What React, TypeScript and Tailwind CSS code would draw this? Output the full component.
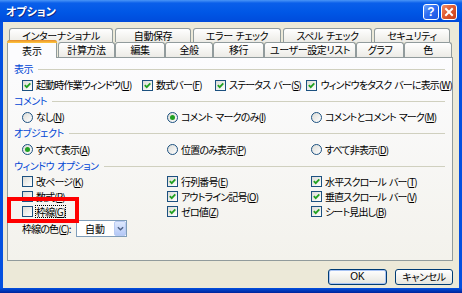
import React from "react";

function Sp({ text }: { text: string }) {
  const parts = text.split(" ");
  return (
    <>
      {parts.map((p, i) => (
        <React.Fragment key={i}>
          {i > 0 && <span className="inline-block w-[3px]" />}
          {p}
        </React.Fragment>
      ))}
    </>
  );
}

function Mn({ label, k }: { label: string; k: string }) {
  return (
    <>
      <Sp text={label} />(<span className="underline underline-offset-[1px]">{k}</span>)
    </>
  );
}

function CheckBox({ checked }: { checked?: boolean }) {
  return (
    <span className="relative block w-[11px] h-[11px] shrink-0 border border-[#1c5180] bg-linear-to-br from-[#dcdcd7] to-white">
      {checked && (
        <svg viewBox="0 0 9 9" className="absolute left-0 top-0 w-[9px] h-[9px]">
          <path d="M1.8 4.2 L3.7 6.1 L7.3 2.3" stroke="#21a121" strokeWidth="1.8" fill="none" />
        </svg>
      )}
    </span>
  );
}

function Radio({ checked }: { checked?: boolean }) {
  return (
    <span className="flex w-[11px] h-[11px] shrink-0 rounded-full border border-[#1c5180] bg-linear-to-br from-[#dcdcd7] to-white items-center justify-center">
      {checked && <span className="block w-[5px] h-[5px] rounded-full bg-[#21a121]" />}
    </span>
  );
}

function Item({
  radio,
  checked,
  label,
  k,
  w,
  focus,
}: {
  radio?: boolean;
  checked?: boolean;
  label: string;
  k: string;
  w?: string;
  focus?: boolean;
}) {
  return (
    <div className={`flex items-center gap-[3px] whitespace-nowrap ${w ?? ""}`}>
      {radio ? <Radio checked={checked} /> : <CheckBox checked={checked} />}
      <span className={`tracking-[-0.85px] ${focus ? "outline-1 outline-dotted outline-black outline-offset-0 leading-[11px]" : ""}`}>
        <Mn label={label} k={k} />
      </span>
    </div>
  );
}

function Heading({ text, h }: { text: string; h: string }) {
  return (
    <div className={`flex items-center pl-[6px] pr-[7px] ${h}`}>
      <span className="text-[#0046d5] whitespace-nowrap tracking-[-0.5px]">
        <Sp text={text} />
      </span>
      <span className="flex-1 h-px bg-[#d0d0bf] ml-[5px] mt-[1px]" />
    </div>
  );
}

function BackTab({ label, w }: { label: string; w: string }) {
  return (
    <div
      className={`h-[14px] ${w} border border-b-0 border-[#919b9c] rounded-t-[3px] bg-linear-to-b from-white to-[#ecebe6] flex items-center justify-center whitespace-nowrap tracking-[-0.4px]`}
    >
      <Sp text={label} />
    </div>
  );
}

function FrontTab({ label, w }: { label: string; w: string }) {
  return (
    <div
      className={`h-[15px] ${w} border border-b-0 border-[#919b9c] rounded-t-[3px] bg-linear-to-b from-white to-[#ecebe6] flex items-center justify-center whitespace-nowrap tracking-[-0.4px]`}
    >
      {label}
    </div>
  );
}

export default function App() {
  return (
    <div className="relative w-[462px] h-[293px] flex flex-col bg-[#0450e0] text-[10px] leading-none text-black font-['Noto_Sans_CJK_JP',sans-serif] [font-feature-settings:'palt'] overflow-hidden">
      {/* Title bar */}
      <div className="h-[22px] shrink-0 flex items-center bg-[linear-gradient(to_bottom,#4a95f7_0%,#0a5fea_14%,#0057e6_55%,#004bdb_100%)]">
        <span className="flex-1 pl-[6px] text-white font-bold text-[11px] [text-shadow:1px_1px_#0a2a8a]">オプション</span>
        <div className="flex gap-[2px] mr-[5px] mt-[1px]">
          <div className="w-[16px] h-[16px] rounded-[3px] border border-white bg-[linear-gradient(135deg,#6fa5fb_0%,#2d6cf2_45%,#1a55e0_100%)] flex items-center justify-center text-white font-bold text-[12px] font-['Liberation_Sans',sans-serif]">
            ?
          </div>
          <div className="w-[16px] h-[16px] rounded-[3px] border border-white bg-[linear-gradient(135deg,#f0906c_0%,#e05a30_45%,#c8401a_100%)] flex items-center justify-center">
            <svg viewBox="0 0 14 14" className="w-[14px] h-[14px]">
              <path d="M4 4 L10 10 M10 4 L4 10" stroke="white" strokeWidth="2" strokeLinecap="square" />
            </svg>
          </div>
        </div>
      </div>

      {/* Body */}
      <div className="flex-1 mx-[3px] bg-[#ece9d8] flex flex-col pt-[6px] pl-[4px] pr-[6px]">
        {/* back tab row */}
        <div className="flex gap-[2px] ml-[2px] h-[14px]">
          <BackTab label="インターナショナル" w="w-[104px]" />
          <BackTab label="自動保存" w="w-[76px]" />
          <BackTab label="エラー チェック" w="w-[88px]" />
          <BackTab label="スペル チェック" w="w-[89px]" />
          <BackTab label="セキュリティ" w="w-[76px]" />
        </div>
        {/* front tab row */}
        <div className="flex items-end h-[17px] mt-[-2px]">
          <div className="relative z-10 w-[50px] h-[18px] mb-[-1px] border border-b-0 border-[#919b9c] rounded-t-[3px] bg-[#fcfcfe] flex flex-col mr-[1px]">
            <div className="h-[3px] mx-[-1px] mt-[-1px] rounded-t-[3px] bg-linear-to-b from-[#e68b2c] to-[#ffc83c]" />
            <div className="flex-1 flex items-center justify-center">表示</div>
          </div>
          <FrontTab label="計算方法" w="w-[57px]" />
          <FrontTab label="編集" w="w-[50px]" />
          <FrontTab label="全般" w="w-[48px]" />
          <FrontTab label="移行" w="w-[51px]" />
          <FrontTab label="ユーザー設定リスト" w="w-[92px]" />
          <FrontTab label="グラフ" w="w-[48px]" />
          <FrontTab label="色" w="w-[48px]" />
        </div>

        {/* Panel */}
        <div className="h-[204px] border border-[#919b9c] bg-linear-to-b from-[#fcfcfe] to-[#f3f2ec] flex flex-col pt-[3px]">
          <Heading text="表示" h="h-[16px]" />
          <div className="h-[16px] flex items-center pl-[14px]">
            <Item label="起動時作業ウィンドウ" k="U" checked w="w-[122px]" />
            <Item label="数式バー" k="F" checked w="w-[74px]" />
            <Item label="ステータス バー" k="S" checked w="w-[93px]" />
            <Item label="ウィンドウをタスク バーに表示" k="W" checked />
          </div>
          <Heading text="コメント" h="h-[16px]" />
          <div className="h-[16px] flex items-center pl-[14px]">
            <Item radio label="なし" k="N" w="w-[145px]" />
            <Item radio checked label="コメント マークのみ" k="I" w="w-[144px]" />
            <Item radio label="コメントとコメント マーク" k="M" />
          </div>
          <Heading text="オブジェクト" h="h-[16px]" />
          <div className="h-[17px] flex items-center pl-[14px]">
            <Item radio checked label="すべて表示" k="A" w="w-[145px]" />
            <Item radio label="位置のみ表示" k="P" w="w-[144px]" />
            <Item radio label="すべて非表示" k="D" />
          </div>
          <Heading text="ウィンドウ オプション" h="h-[15px]" />
          <div className="h-[15px] mt-[1px] flex items-center pl-[14px]">
            <Item label="改ページ" k="K" w="w-[145px]" />
            <Item label="行列番号" k="E" checked w="w-[144px]" />
            <Item label="水平スクロール バー" k="T" checked />
          </div>
          <div className="h-[15px] flex items-center pl-[14px]">
            <Item label="数式" k="R" w="w-[145px]" />
            <Item label="アウトライン記号" k="O" checked w="w-[144px]" />
            <Item label="垂直スクロール バー" k="V" checked />
          </div>
          <div className="h-[15px] flex items-center pl-[14px]">
            <Item label="枠線" k="G" focus w="w-[145px]" />
            <Item label="ゼロ値" k="Z" checked w="w-[144px]" />
            <Item label="シート見出し" k="B" checked />
          </div>
          <div className="h-[17px] mt-[1px] flex items-center pl-[14px]">
            <span className="w-[54px] whitespace-nowrap tracking-[-0.85px]">
              枠線の色(<span className="underline underline-offset-[1px]">C</span>):
            </span>
            <div className="w-[51px] h-[17px] border border-[#7f9db9] bg-white flex items-center">
              <span className="flex-1 pl-[8px]">自動</span>
              <div className="w-[12px] h-[15px] rounded-[2px] border border-[#b9cbf3] bg-linear-to-b from-[#dfe9fd] to-[#b4c8f6] flex items-center justify-center">
                <svg viewBox="0 0 8 5" className="w-[7px] h-[5px]">
                  <path d="M1 1 L4 4 L7 1" stroke="#4d6185" strokeWidth="1.6" fill="none" />
                </svg>
              </div>
            </div>
          </div>
        </div>

        {/* Buttons */}
        <div className="flex justify-end gap-[8px] mt-[8px]">
          <div className="w-[59px] h-[16px] rounded-[3px] border border-[#003c74] bg-linear-to-b from-white to-[#e6e5de] shadow-[inset_0_0_0_1px_#a9c4f4] flex items-center justify-center font-['Liberation_Sans',sans-serif]">
            OK
          </div>
          <div className="w-[58px] h-[16px] rounded-[3px] border border-[#003c74] bg-linear-to-b from-white to-[#e6e5de] flex items-center justify-center tracking-[-0.4px]">
            キャンセル
          </div>
        </div>
      </div>
      <div className="h-[5px] shrink-0 bg-linear-to-b from-[#0450e0] to-[#00239a]" />

      {/* Red annotation box */}
      <div className="absolute left-[7px] top-[197px] w-[72px] h-[26px] border-4 border-[#ff0000]" />
    </div>
  );
}
